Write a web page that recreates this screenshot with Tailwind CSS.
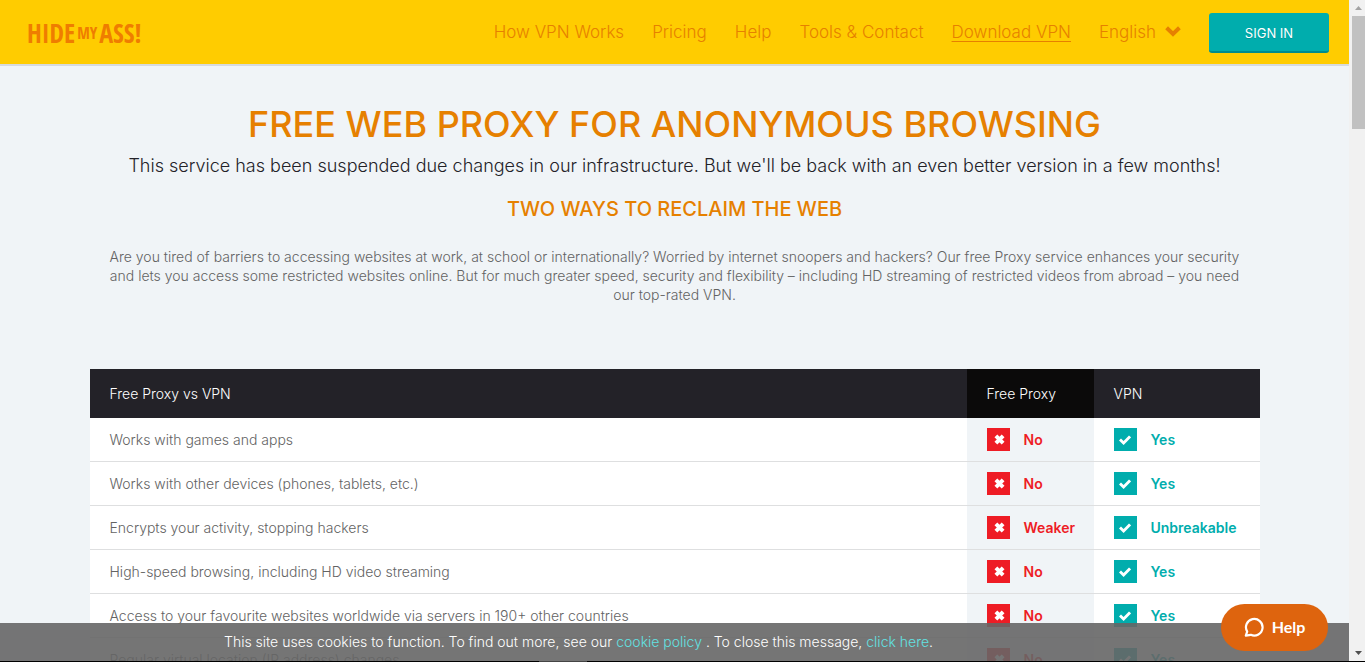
<!DOCTYPE html>
<html lang="en">
<head>
    <meta charset="UTF-8">
    <meta name="viewport" content="width=device-width, initial-scale=1.0">
    <title>Free Web Proxy | HideMyAss!</title>
    <script src="https://cdn.jsdelivr.net/npm/@tailwindcss/browser@4"></script>
    <style> body { font-family: 'Inter', 'Open Sans', sans-serif; } </style>
</head>
<body class="flex flex-col h-screen overflow-hidden bg-[#f0f4f7] text-[#636363] font-light">

    <div class="flex flex-1 min-h-0">
        <div class="relative flex-1 min-w-0 overflow-hidden">

            <header class="flex items-center justify-between h-[66px] pt-[2px] pl-[27px] pr-5 bg-[#ffcc00] border-b-2 border-[#d6dadd]">
                <a href="#" class="flex items-center font-['Liberation_Sans_Narrow','Open_Sans_Condensed',sans-serif] font-bold text-[#ef7d00] text-[26px] leading-8">HIDE<span class="text-base mx-[2px]">MY</span>ASS!</a>
                <nav class="flex items-center gap-7 text-[17px] text-[#e68000]">
                    <a href="#">How VPN Works</a>
                    <a href="#">Pricing</a>
                    <a href="#">Help</a>
                    <a href="#">Tools &amp; Contact</a>
                    <a href="#" class="underline underline-offset-3">Download VPN</a>
                    <div class="flex items-center gap-2">
                        <select aria-label="Language" class="appearance-none bg-transparent font-light">
                            <option>English</option>
                        </select>
                        <svg class="w-4 h-[11px] mb-1" viewBox="0 0 16 11" fill="none" stroke="currentColor" stroke-width="4"><path d="M1.6 1.8 8 8 14.4 1.8"/></svg>
                    </div>
                    <button class="w-[120px] h-10 pt-[3px] rounded-[3px] bg-[#00adad] border-b-2 border-[#008c8c] text-white text-[13px] font-normal text-shadow-2xs">SIGN IN</button>
                </nav>
            </header>

            <main class="max-w-[1170px] mx-auto pt-9">
                <div class="text-center">
                    <h1 class="text-4xl leading-11 font-medium text-[#e68000]">FREE WEB PROXY FOR ANONYMOUS BROWSING</h1>
                    <p class="mt-2 text-lg leading-6 text-[#232228]">This service has been suspended due changes in our infrastructure. But we'll be back with an even better version in a few months!</p>
                    <h2 class="mt-[19px] text-xl leading-6 font-medium text-[#e68000]">TWO WAYS TO RECLAIM THE WEB</h2>
                    <p class="mt-[26px] px-3 text-sm leading-[19px]">Are you tired of barriers to accessing websites at work, at school or internationally? Worried by internet snoopers and hackers? Our free Proxy service enhances your security and lets you access some restricted websites online. But for much greater speed, security and flexibility – including HD streaming of restricted videos from abroad – you need our top-rated VPN.</p>
                </div>

                <table class="w-full mt-[65px] border-separate border-spacing-0 text-left text-sm bg-white">
                    <thead>
                        <tr class="h-[49px] bg-[#232228] text-white">
                            <th class="px-5 font-light">Free Proxy vs VPN</th>
                            <th class="w-[127px] pl-5 font-light bg-[#0b0a0a]">Free Proxy</th>
                            <th class="w-[166px] pl-5 font-light">VPN</th>
                        </tr>
                    </thead>
                    <tbody id="compare-rows"></tbody>
                </table>
            </main>

            <!-- Cookie notice -->
            <div class="absolute inset-x-0 bottom-0 h-[38px] pr-[192px] bg-[#666666]/90 text-white text-sm leading-[38px] text-center">
                This site uses cookies to function. To find out more, see our <a href="#" class="text-[#62e2e2]">cookie policy</a> . To close this message, <a href="#" class="text-[#62e2e2]">click here</a>.
            </div>

            <!-- Help widget -->
            <button class="absolute right-[21px] bottom-[10px] flex items-center justify-center gap-2 w-[107px] h-[47px] pb-[2px] rounded-full bg-[#de640e] text-white text-base font-bold font-['Lato',sans-serif]">
                <svg class="w-5 h-5" viewBox="0 0 20 20" fill="none" stroke="currentColor" stroke-width="2.2" stroke-linejoin="round"><path d="M1.8 18.6 3.2 14.6A8.3 8.3 0 1 1 6.8 17.8Z"/></svg>
                Help
            </button>
        </div>

        <!-- Scrollbar -->
        <div class="flex flex-col items-center w-4 pl-[2px] bg-[#f1f1f1]">
            <svg class="w-[7px] h-4" viewBox="0 0 7 16" fill="#a3a3a3"><path d="M0 10 3.5 6 7 10Z"/></svg>
            <div class="w-[13px] h-[113px] bg-[#c1c1c1]"></div>
            <svg class="w-[7px] h-4 mt-auto" viewBox="0 0 7 16" fill="#505050"><path d="M0 6 3.5 10 7 6Z"/></svg>
        </div>
    </div>
    <div class="h-px bg-black pl-[539px]"><div class="w-12 h-px bg-[#444444]"></div></div>

    <script>
        const rows = [
            ['Works with games and apps', 'No', 'Yes'],
            ['Works with other devices (phones, tablets, etc.)', 'No', 'Yes'],
            ['Encrypts your activity, stopping hackers', 'Weaker', 'Unbreakable'],
            ['High-speed browsing, including HD video streaming', 'No', 'Yes'],
            ['Access to your favourite websites worldwide via servers in 190+ other countries', 'No', 'Yes'],
            ['Regular virtual location (IP address) changes', 'No', 'Yes']
        ];

        const cross = '<span class="flex items-center justify-center w-[23px] h-[23px] bg-[#ee1c25]"><svg class="w-[11px] h-[11px] ml-[2px]" viewBox="0 0 11 11" fill="none" stroke="#fff" stroke-width="4"><path d="M1.9 1.9 9.1 9.1M9.1 1.9 1.9 9.1"/></svg></span>';
        const tick = '<span class="flex items-center justify-center w-[23px] h-[23px] bg-[#00adad]"><svg class="w-3 h-[10px]" viewBox="0 0 12 10" fill="none" stroke="#fff" stroke-width="2.8"><path d="M1 4.4 4.6 8 11 1.4"/></svg></span>';

        document.getElementById('compare-rows').innerHTML = rows.map(([feature, proxy, vpn]) => `
            <tr class="h-11">
                <td class="px-5 border-b border-[#dedfe0]">${feature}</td>
                <td class="pl-5 border-b border-[#dedfe0] bg-[#f0f4f7]"><div class="flex items-center gap-[14px] text-sm font-semibold text-[#ee1c25]">${cross}${proxy}</div></td>
                <td class="pl-5 border-b border-[#dedfe0]"><div class="flex items-center gap-[14px] text-sm font-semibold text-[#00adad]">${tick}${vpn}</div></td>
            </tr>`).join('');
    </script>
</body>
</html>
